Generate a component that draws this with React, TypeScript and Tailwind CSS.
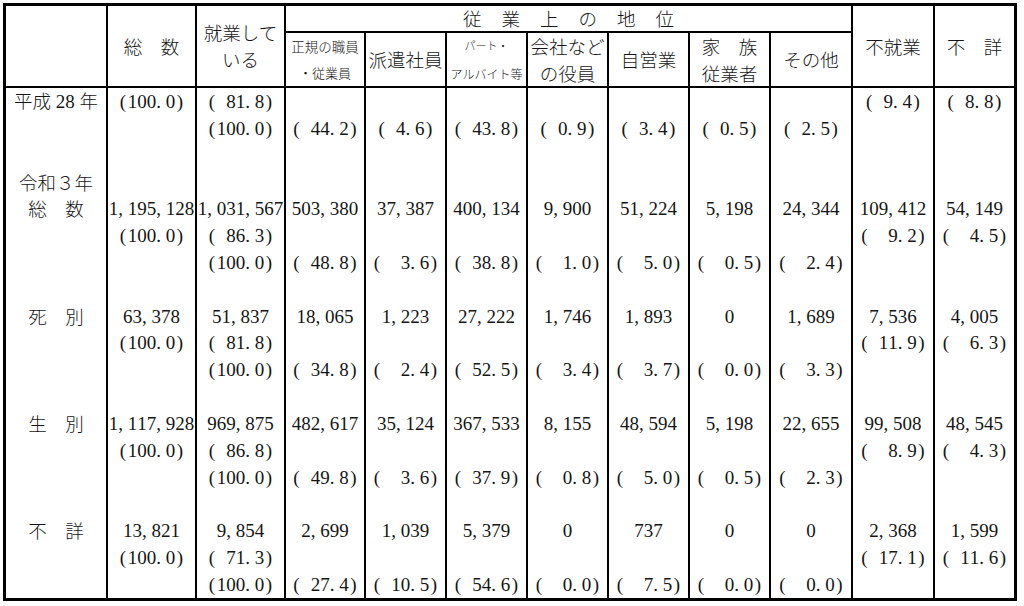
import type { ReactNode } from "react";

// 12 columns: label, 総数, 就業している, 7 status columns, 不就業, 不詳
const GRID =
  "grid grid-cols-[102px_89px_89px_80px_81px_81px_81px_81px_81px_82px_82px_79px]";

function Num({ s }: { s: string }) {
  return (
    <span className="inline-flex font-['Liberation_Serif',serif] text-[19px] leading-none">
      {Array.from(s).map((ch, i) => (
        <span
          key={i}
          className={ch === "," || ch === "." ? "w-[9.5px] text-left" : "w-[9.5px] text-center"}
        >
          {ch === " " ? "\u00a0" : ch}
        </span>
      ))}
    </span>
  );
}

function Jp({ children, className = "" }: { children: ReactNode; className?: string }) {
  return (
    <span className={`font-['Noto_Sans_CJK_JP',sans-serif] font-light leading-none ${className}`}>
      {children}
    </span>
  );
}

type Line = (string | null)[];

const E: Line = Array(11).fill(null);

const rows: { label: ReactNode; cells: Line }[] = [
  {
    label: (
      <span className="inline-flex items-baseline">
        <Jp className="text-[18.5px]">平成</Jp>
        <span className="font-['Liberation_Serif',serif] text-[19px] leading-none">&nbsp;28&nbsp;</span>
        <Jp className="text-[18.5px]">年</Jp>
      </span>
    ),
    cells: ["(100.0)", "( 81.8)", null, null, null, null, null, null, null, "( 9.4)", "( 8.8)"],
  },
  { label: null, cells: [null, "(100.0)", "( 44.2)", "( 4.6)", "( 43.8)", "( 0.9)", "( 3.4)", "( 0.5)", "( 2.5)", null, null] },
  { label: null, cells: E },
  { label: <Jp className="text-[18.5px]">令和３年</Jp>, cells: E },
  {
    label: <Jp className="text-[18.5px]">総　数</Jp>,
    cells: ["1,195,128", "1,031,567", "503,380", "37,387", "400,134", "9,900", "51,224", "5,198", "24,344", "109,412", "54,149"],
  },
  { label: null, cells: ["(100.0)", "( 86.3)", null, null, null, null, null, null, null, "(  9.2)", "(  4.5)"] },
  { label: null, cells: [null, "(100.0)", "( 48.8)", "(  3.6)", "( 38.8)", "(  1.0)", "(  5.0)", "(  0.5)", "(  2.4)", null, null] },
  { label: null, cells: E },
  {
    label: <Jp className="text-[18.5px]">死　別</Jp>,
    cells: ["63,378", "51,837", "18,065", "1,223", "27,222", "1,746", "1,893", "0", "1,689", "7,536", "4,005"],
  },
  { label: null, cells: ["(100.0)", "( 81.8)", null, null, null, null, null, null, null, "( 11.9)", "(  6.3)"] },
  { label: null, cells: [null, "(100.0)", "( 34.8)", "(  2.4)", "( 52.5)", "(  3.4)", "(  3.7)", "(  0.0)", "(  3.3)", null, null] },
  { label: null, cells: E },
  {
    label: <Jp className="text-[18.5px]">生　別</Jp>,
    cells: ["1,117,928", "969,875", "482,617", "35,124", "367,533", "8,155", "48,594", "5,198", "22,655", "99,508", "48,545"],
  },
  { label: null, cells: ["(100.0)", "( 86.8)", null, null, null, null, null, null, null, "(  8.9)", "(  4.3)"] },
  { label: null, cells: [null, "(100.0)", "( 49.8)", "(  3.6)", "( 37.9)", "(  0.8)", "(  5.0)", "(  0.5)", "(  2.3)", null, null] },
  { label: null, cells: E },
  {
    label: <Jp className="text-[18.5px]">不　詳</Jp>,
    cells: ["13,821", "9,854", "2,699", "1,039", "5,379", "0", "737", "0", "0", "2,368", "1,599"],
  },
  { label: null, cells: ["(100.0)", "( 71.3)", null, null, null, null, null, null, null, "( 17.1)", "( 11.6)"] },
  { label: null, cells: [null, "(100.0)", "( 27.4)", "( 10.5)", "( 54.6)", "(  0.0)", "(  7.5)", "(  0.0)", "(  0.0)", null, null] },
];

const headCell = "flex flex-col items-center justify-center border-r-2 border-b-2 border-black";

function Header() {
  return (
    <div className={`${GRID} grid-rows-[27px_55px]`}>
      <div className={`${headCell} row-span-2`} />
      <div className={`${headCell} row-span-2`}>
        <Jp className="text-[18.5px]">総　数</Jp>
      </div>
      <div className={`${headCell} row-span-2 gap-[8.5px]`}>
        <Jp className="text-[18.5px]">就業して</Jp>
        <Jp className="text-[18.5px]">いる</Jp>
      </div>
      <div className={`${headCell} col-span-7 !flex-row gap-[20px]`}>
        {"従業上の地位".split("").map((c) => (
          <Jp key={c} className="text-[18.5px]">
            {c}
          </Jp>
        ))}
      </div>
      <div className={`${headCell} row-span-2`}>
        <Jp className="text-[18.5px]">不就業</Jp>
      </div>
      <div className="row-span-2 flex items-center justify-center border-b-2 border-black">
        <Jp className="text-[18.5px]">不　詳</Jp>
      </div>

      <div className={`${headCell} gap-[13px]`}>
        <Jp className="text-[13.5px]">正規の職員</Jp>
        <Jp className="text-[13px]">・従業員</Jp>
      </div>
      <div className={headCell}>
        <Jp className="text-[18.5px]">派遣社員</Jp>
      </div>
      <div className={`${headCell} gap-[17px]`}>
        <Jp className="text-[11px]">パート・</Jp>
        <Jp className="text-[12px]">アルバイト等</Jp>
      </div>
      <div className={`${headCell} gap-[8.5px]`}>
        <Jp className="text-[18.5px]">会社など</Jp>
        <Jp className="text-[18.5px]">の役員</Jp>
      </div>
      <div className={headCell}>
        <Jp className="text-[18.5px]">自営業</Jp>
      </div>
      <div className={`${headCell} gap-[8.5px]`}>
        <Jp className="text-[18.5px]">家　族</Jp>
        <Jp className="text-[18.5px]">従業者</Jp>
      </div>
      <div className={headCell}>
        <Jp className="text-[18.5px]">その他</Jp>
      </div>
    </div>
  );
}

export default function App() {
  return (
    <div className="min-h-screen bg-white pl-[3px] pt-[3px] text-[#151515]">
      <div className="w-[1014px] border-[3px] border-black">
        <Header />
        <div className={`${GRID} auto-rows-[26.84px]`}>
          {rows.map((row, r) => (
            <div key={r} className="contents">
              <div className="flex items-center justify-center border-r-2 border-black">{row.label}</div>
              {row.cells.map((c, i) => (
                <div
                  key={i}
                  className={
                    i === 10
                      ? "flex items-center justify-center"
                      : "flex items-center justify-center border-r-2 border-black"
                  }
                >
                  {c && <Num s={c} />}
                </div>
              ))}
            </div>
          ))}
        </div>
      </div>
    </div>
  );
}
